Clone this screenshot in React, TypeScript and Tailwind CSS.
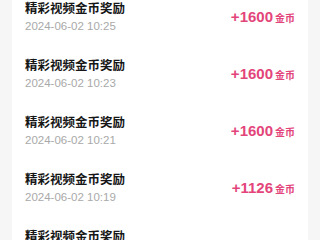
const records = [
  { title: "精彩视频金币奖励", time: "2024-06-02 10:25", amount: 1600 },
  { title: "精彩视频金币奖励", time: "2024-06-02 10:23", amount: 1600 },
  { title: "精彩视频金币奖励", time: "2024-06-02 10:21", amount: 1600 },
  { title: "精彩视频金币奖励", time: "2024-06-02 10:19", amount: 1126 },
  { title: "精彩视频金币奖励", time: "2024-06-02 10:17", amount: 1600 },
];

export default function App() {
  return (
    <div
      className="h-[240px] w-[320px] overflow-hidden bg-[#f6f6f6] px-[12px]"
      style={{ fontFamily: '"Liberation Sans", "Noto Sans CJK SC", sans-serif' }}
    >
      <div className="-mt-[11.5px] bg-white px-[13px]">
        {records.map((r, i) => (
          <div key={i} className="flex h-[57px] items-center justify-between">
            <div className="flex flex-col">
              <span className="text-[12.5px] leading-[18px] font-semibold text-[#161616]">
                {r.title}
              </span>
              <span className="text-[11.5px] leading-[16px] text-[#a9a9a9]">{r.time}</span>
            </div>
            <div className="flex items-baseline font-semibold text-[#e3457a]">
              <span className="text-[15px] leading-[18px]">+{r.amount}</span>
              <span className="ml-[2px] text-[10px]">金币</span>
            </div>
          </div>
        ))}
      </div>
    </div>
  );
}
